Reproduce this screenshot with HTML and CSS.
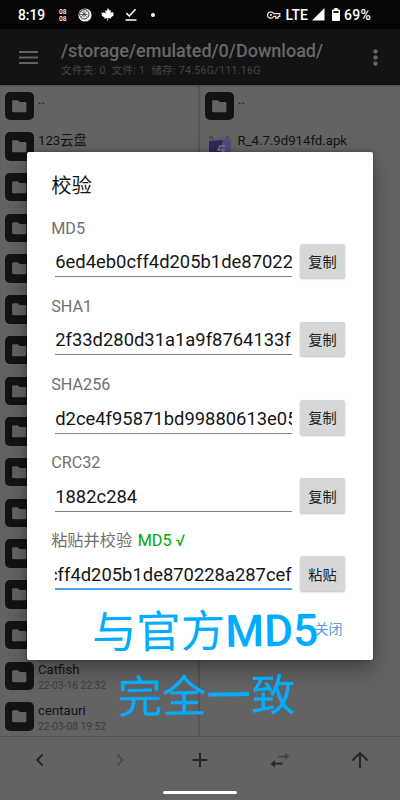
FILE: index.html
```
<!DOCTYPE html>
<html lang="zh-CN">
<head>
<meta charset="utf-8">
<title>校验</title>
<link rel="stylesheet" href="styles.css">
</head>
<body>
<svg width="0" height="0" class="defs">
  <symbol id="folder" viewBox="0 0 28 28"><path d="M8.5 8h4.1l1.7 1.8h5.4q1.3 0 1.3 1.3v7.6q0 1.3-1.3 1.3H8.3Q7 20 7 18.700V9.400Q7 8 8.500 8z" fill="#636363"/></symbol>
</svg>
<div class="screen">
  <header class="status">
    <span class="clock">8:19</span>
    <span class="bits"><span>08</span><span>08</span></span>
    <svg class="ball" width="14" height="14" viewBox="0 0 14 14"><circle cx="7" cy="7" r="6.600" fill="#f4f4f4"/><circle cx="6.300" cy="6.200" r="4.700" fill="none" stroke="#222" stroke-width=".9"/><path d="M2.500 6.500h7M6 2v7M3.300 3.300l5.700 5.500M9 3.300L3.300 9" stroke="#333" stroke-width=".75"/></svg>
    <svg class="leaf" width="13" height="13" viewBox="0 0 13 13"><path d="M7 0l1.400 2.500 1.400-.5-.1 3.100 1.500-1.300.4.900 1.300 0-.8 1.900.8.700-3 2.100.4 1-2.800-.4-.6 2.500-.7-.1.200-2.500-3.200.8.400-1.300L.3 7.500l.9-.6L.1 4.800l2 .1.500-.8 2 1.700-.3-3.600 1.300.7z" fill="#fff"/></svg>
    <svg class="done" width="12" height="13" viewBox="0 0 12 13"><path d="M1.300 5l3 3L10.500 1.200M.5 12h11" fill="none" stroke="#fff" stroke-width="1.600"/></svg>
    <i class="dot"></i>
    <span class="grow"></span>
    <svg class="key" width="14" height="8" viewBox="0 0 14 8"><path d="M3.800.8a3.200 3.200 0 1 0 2.900 4.500h2V7h2.500V5.300h1.600V2.700H6.700A3.200 3.200 0 0 0 3.800.8z" fill="none" stroke="#ddd" stroke-width="1.300"/><circle cx="3.900" cy="4" r="1.100" fill="#ddd"/></svg>
    <span class="lte">LTE</span>
    <svg class="signal" width="13" height="13" viewBox="0 0 13 13"><path d="M0 12.500L12.500 0v12.500z" fill="#fff"/></svg>
    <svg class="battery" width="8" height="13" viewBox="0 0 8 13"><path d="M2.300 0h3.400v1.400H7q1 0 1 1V12q0 1-1 1H1q-1 0-1-1V2.400q0-1 1-1h1.300z" fill="#fff"/><path d="M1.400 3h5.200v2H1.400z" fill="#222"/></svg>
    <span class="pct">69%</span>
  </header>
  <div class="toolbar">
    <svg class="menu" width="19" height="13" viewBox="0 0 19 13"><path d="M0 1h19M0 6.500h19M0 12h19" stroke="#636363" stroke-width="1.800"/></svg>
    <div class="heading"><div class="path">/storage/emulated/0/Download/</div><div class="info">文件夹: 0&nbsp; 文件: 1&nbsp; 储存: 74.56G/111.16G</div></div>
    <svg class="more" width="5" height="17" viewBox="0 0 5 17"><g fill="#636363"><circle cx="2.500" cy="2.500" r="2.200"/><circle cx="2.500" cy="8.500" r="2.200"/><circle cx="2.500" cy="14.500" r="2.200"/></g></svg>
  </div>
  <main class="panes">
    <section class="pane left">
      <div class="row"><svg class="tile"><use href="#folder"/></svg><div class="name">..</div></div>
      <div class="row"><svg class="tile"><use href="#folder"/></svg><div class="name">123云盘</div></div>
      <div class="row"><svg class="tile"><use href="#folder"/></svg></div>
      <div class="row"><svg class="tile"><use href="#folder"/></svg></div>
      <div class="row"><svg class="tile"><use href="#folder"/></svg></div>
      <div class="row"><svg class="tile"><use href="#folder"/></svg></div>
      <div class="row"><svg class="tile"><use href="#folder"/></svg></div>
      <div class="row"><svg class="tile"><use href="#folder"/></svg></div>
      <div class="row"><svg class="tile"><use href="#folder"/></svg></div>
      <div class="row"><svg class="tile"><use href="#folder"/></svg></div>
      <div class="row"><svg class="tile"><use href="#folder"/></svg></div>
      <div class="row"><svg class="tile"><use href="#folder"/></svg></div>
      <div class="row"><svg class="tile"><use href="#folder"/></svg></div>
      <div class="row"><svg class="tile"><use href="#folder"/></svg></div>
      <div class="row"><svg class="tile"><use href="#folder"/></svg><div class="name">Catfish<small>22-03-16 22:32</small></div></div>
      <div class="row"><svg class="tile"><use href="#folder"/></svg><div class="name">centauri<small>22-03-08 19:52</small></div></div>
    </section>
    <section class="pane right">
      <div class="row"><svg class="tile"><use href="#folder"/></svg><div class="name">..</div></div>
      <div class="row"><svg class="apk" viewBox="0 0 28 28"><path d="M4 5l5 1 11-1 4-1 2 2v21H4z" fill="#5c596a"/><path d="M4 9l14-1-3 19H4z" fill="#2f2858"/><path d="M18 8h8v19H14z" fill="#514b78"/><path d="M20 14h-5l-2 4h6l-2 4h-6" fill="none" stroke="#77748c" stroke-width="1.500"/><path d="M4 4h4v3H4zM21 4h3v3h-3z" fill="#4e4e51"/></svg><div class="name">R_4.7.9d914fd.apk</div></div>
    </section>
  </main>
  <footer class="nav">
    <svg viewBox="0 0 24 24"><path d="M15 6l-6 6 6 6" fill="none" stroke="#252525" stroke-width="2.100"/></svg>
    <svg viewBox="0 0 24 24"><path d="M9 6l6 6-6 6" fill="none" stroke="#4b4b4b" stroke-width="2"/></svg>
    <svg viewBox="0 0 24 24"><path d="M12 4v16M4 12h16" stroke="#252525" stroke-width="2.100"/></svg>
    <svg viewBox="0 0 24 24"><path d="M10 8.300h8" stroke="#454545" stroke-width="2"/><path d="M17.500 4.200l4.700 4.100-4.700 4.100z" fill="#454545"/><path d="M6 16h8.500" stroke="#252525" stroke-width="2"/><path d="M6.500 11.900l-4.700 4.100 4.700 4.100z" fill="#252525"/></svg>
    <svg viewBox="0 0 24 24"><path d="M12 21V4.500M3.700 12.500L12 4.300l8.300 8.200" fill="none" stroke="#252525" stroke-width="2.100"/></svg>
  </footer>
  <div class="homebar"><i></i></div>

  <div class="dialog">
    <h1>校验</h1>
    <div class="field"><label>MD5</label><div class="line"><div class="input"><span>6ed4eb0cff4d205b1de87022</span></div><button>复制</button></div></div>
    <div class="field"><label>SHA1</label><div class="line"><div class="input"><span>2f33d280d31a1a9f8764133f</span></div><button>复制</button></div></div>
    <div class="field"><label>SHA256</label><div class="line"><div class="input"><span>d2ce4f95871bd99880613e05</span></div><button>复制</button></div></div>
    <div class="field"><label>CRC32</label><div class="line"><div class="input"><span>1882c284</span></div><button>复制</button></div></div>
    <div class="field"><label>粘贴并校验 <b>MD5 √</b></label><div class="line"><div class="input active"><span>cff4d205b1de870228a287cef</span></div><button>粘贴</button></div></div>
    <div class="close">关闭</div>
  </div>
  <div class="note first">与官方<b>MD5</b></div>
  <div class="note second">完全一致</div>
</div>
</body>
</html>
```
FILE: styles.css
```
* { box-sizing: border-box; }
body { margin: 0; font-family: Roboto, "Noto Sans CJK SC", sans-serif; }
svg { display: block; flex: none; }
.defs { position: absolute; }
.screen { position: relative; width: 400px; height: 800px; overflow: hidden; display: flex; flex-direction: column; background: #636363; }
.status { height: 29px; flex: none; background: #060606; color: #fff; display: flex; align-items: center; padding: 0 29px 0 18px; font-size: 14px; font-weight: 500; white-space: nowrap; }
.clock { width: 41px; font-size: 13.8px; }
.bits { display: flex; flex-direction: column; font-size: 6.5px; line-height: 6.5px; width: 19px; padding-top: 2px; }
.leaf { margin-left: 9px; }
.done { margin-left: 11px; }
.dot { width: 4px; height: 4px; border-radius: 50%; background: #fff; margin-left: 14px; }
.grow { flex: 1; }
.lte { margin: 0 4px 0 5px; font-size: 14px; }
.battery { margin: 0 4px 0 7px; }
.pct { letter-spacing: .3px; }
.toolbar { height: 56px; flex: none; background: #131313; display: flex; align-items: center; padding: 0 22px 0 19px; color: #686868; }
.heading { flex: 1; padding: 3px 0 0 23px; white-space: nowrap; }
.path { font-size: 18.05px; line-height: 22px; font-weight: 500; }
.info { font-size: 10.7px; line-height: 15px; color: #444; margin-top: 1px; letter-spacing: .24px; }
.panes { height: 652px; flex: none; display: grid; grid-template-columns: 200px 200px; border-bottom: 1px solid #535353; overflow: hidden; }
.pane { padding-top: .4px; background: #636363; box-shadow: inset 0 2px 2px -1px #4b4b4b; }
.left { box-shadow: inset 0 2px 2px -1px #4b4b4b, inset -3px 0 3px -2px #4c4c4c; }
.row { height: 40.73px; display: flex; align-items: center; padding-left: 5px; }
.tile { width: 28.500px; height: 28.500px; background: #131313; border-radius: 5px; }
.apk { width: 28px; height: 28px; }
.name { margin-left: 4.500px; padding-top: 1px; height: 31px; font-size: 13.2px; line-height: 18px; color: #121212; white-space: nowrap; }
.name small { display: block; font-size: 10.2px; line-height: 14px; color: #3b3b3b; }
.nav { height: 46px; flex: none; display: grid; grid-template-columns: repeat(5, 80px); justify-items: center; align-items: center; }
.nav svg { width: 22px; height: 22px; }
.homebar { flex: 1; display: flex; justify-content: center; padding-top: 8px; }
.homebar i { width: 74px; height: 3px; border-radius: 2px; background: #fff; }
.dialog { position: absolute; left: 26.700px; top: 152px; width: 346.800px; height: 508px; padding: 21px 24.500px 0; background: #fff; border-radius: 2px; box-shadow: 0 10px 22px rgba(0,0,0,.32), 0 0 4px rgba(0,0,0,.3); }
h1 { margin: 0; height: 44.500px; font-size: 20.300px; line-height: 27px; font-weight: 400; color: #151515; }
.field { height: 78.200px; }
label { display: block; height: 22px; line-height: 22px; font-size: 16.200px; color: #707070; white-space: nowrap; }
label b { font-weight: 400; color: #00a800; margin-left: 1.5px; }
.line { display: flex; align-items: flex-start; padding: 4.200px 0 0 4px; }
.input { width: 236.500px; height: 33px; margin-top: .5px; border-bottom: 1px solid #808080; overflow: hidden; white-space: nowrap; font-size: 18.400px; line-height: 36px; color: #151515; }
.active { border-bottom: 2px solid #45a2f5; display: flex; justify-content: flex-end; }
button { width: 45.500px; height: 34.500px; margin-left: 8px; padding: 0; border: 0; border-radius: 2px; background: #d6d8d7; box-shadow: 0 1px 2px rgba(0,0,0,.25); color: #202020; font: 14.200px Roboto, "Noto Sans CJK SC", sans-serif; }
.close { margin: 11px 6.500px 0 0; text-align: right; font-size: 14px; line-height: 20px; color: #579ce0; }
.note { position: absolute; color: #00acff; font-size: 44.400px; line-height: 56px; white-space: nowrap; transform: rotate(-.8deg); }
.note b { font-weight: 500; }
.first { left: 92px; top: 604px; }
.second { left: 117.500px; top: 669px; }
```
